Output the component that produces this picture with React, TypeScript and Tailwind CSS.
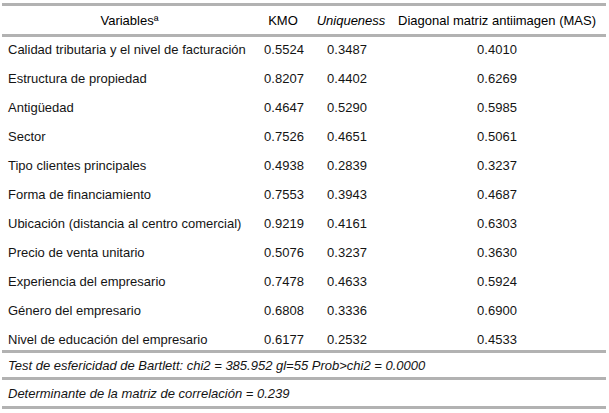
import React from "react";

const rows: [string, string, string, string][] = [
  ["Calidad tributaria y el nivel de facturación", "0.5524", "0.3487", "0.4010"],
  ["Estructura de propiedad", "0.8207", "0.4402", "0.6269"],
  ["Antigüedad", "0.4647", "0.5290", "0.5985"],
  ["Sector", "0.7526", "0.4651", "0.5061"],
  ["Tipo clientes principales", "0.4938", "0.2839", "0.3237"],
  ["Forma de financiamiento", "0.7553", "0.3943", "0.4687"],
  ["Ubicación (distancia al centro comercial)", "0.9219", "0.4161", "0.6303"],
  ["Precio de venta unitario", "0.5076", "0.3237", "0.3630"],
  ["Experiencia del empresario", "0.7478", "0.4633", "0.5924"],
  ["Género del empresario", "0.6808", "0.3336", "0.6900"],
  ["Nivel de educación del empresario", "0.6177", "0.2532", "0.4533"],
];

const cols = "grid grid-cols-[252px_58px_74px_220px]";

export default function App() {
  return (
    <div className="w-[609px] h-[413px] bg-white pt-[3px] pl-[2px] text-[13px] text-[#141414] font-['Liberation_Sans',Arial,sans-serif] leading-none">
      <div className="w-[604px]">
        <div className="h-[3px] bg-[#b2b2b2]" />
        <div className={`${cols} h-[28px] items-center text-black`}>
          <div className="text-center pl-[3px]">Variablesª</div>
          <div className="text-center">KMO</div>
          <div className="text-center pl-[4px] italic">Uniqueness</div>
          <div className="text-center pl-[2px]">Diagonal matriz antiimagen (MAS)</div>
        </div>
        <div className="h-[3px] bg-[#b2b2b2]" />
        <div className="flex flex-col h-[313px] justify-between pt-[6px] pb-[4px]">
          {rows.map((r) => (
            <div key={r[0]} className={`${cols} items-center h-[13px]`}>
              <div className="pl-[6px]">{r[0]}</div>
              <div className="text-center pl-[2px]">{r[1]}</div>
              <div className="text-center pr-[4px]">{r[2]}</div>
              <div className="text-center pl-[2px]">{r[3]}</div>
            </div>
          ))}
        </div>
        <div className="h-[3px] bg-[#b2b2b2]" />
        <div className="h-[24px] flex items-center pl-[6px] italic">
          Test de esfericidad de Bartlett: chi2 = 385.952 gl=55 Prob&gt;chi2 = 0.0000
        </div>
        <div className="h-[3px] bg-[#b2b2b2]" />
        <div className="h-[26px] flex items-center pl-[6px] italic">
          Determinante de la matriz de correlación = 0.239
        </div>
        <div className="h-[3px] bg-[#b2b2b2]" />
      </div>
    </div>
  );
}
